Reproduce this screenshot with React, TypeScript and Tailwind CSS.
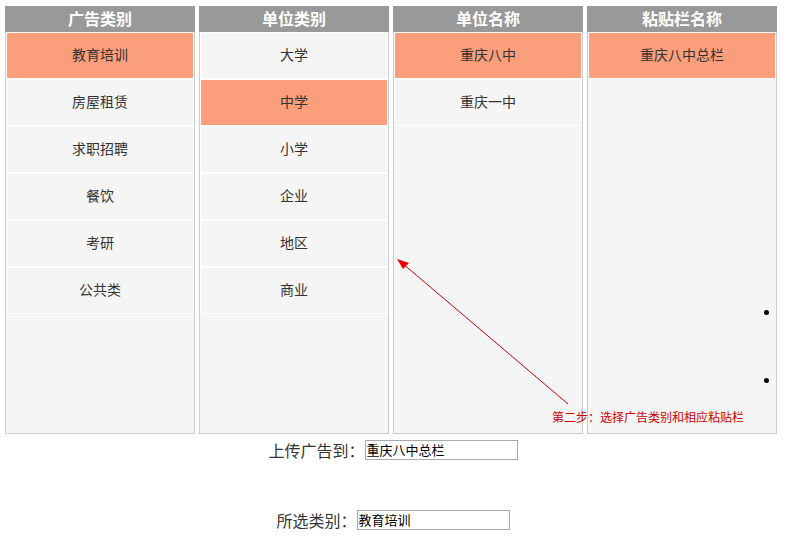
import React from "react";

const cols = [
  { title: "广告类别", items: ["教育培训", "房屋租赁", "求职招聘", "餐饮", "考研", "公共类"], active: 0 },
  { title: "单位类别", items: ["大学", "中学", "小学", "企业", "地区", "商业"], active: 1 },
  { title: "单位名称", items: ["重庆八中", "重庆一中"], active: 0 },
  { title: "粘贴栏名称", items: ["重庆八中总栏"], active: 0 },
];

const font = { fontFamily: '"Microsoft YaHei", "Noto Sans CJK SC", sans-serif' };

export default function App() {
  return (
    <div className="relative w-[789px] h-[540px] bg-white text-[#333]" style={font}>
      <div className="flex gap-[4px] pl-[5px] pt-[6px]">
        {cols.map((c, ci) => (
          <div key={ci} className="w-[190px] flex flex-col">
            <div className="h-[26px] bg-[#999] text-white font-bold text-[16px] leading-[25px] text-center">
              {c.title}
            </div>
            <div className="h-[402px] bg-[#f5f5f5] border border-t-0 border-[#ccc] flex flex-col">
              {c.items.map((it, i) => (
                <div
                  key={i}
                  className={`h-[47px] border border-white flex items-center justify-center text-[14px] pb-[3px] ${
                    i === c.active ? "bg-[#fa9e7b]" : "bg-[#f5f5f5]"
                  }`}
                >
                  {it}
                </div>
              ))}
            </div>
          </div>
        ))}
      </div>

      <div className="flex flex-col items-center mt-[6px]">
        <div className="flex items-center h-[20px] text-[16px] ml-[-3px]">
          <span>上传广告到：</span>
          <div className="w-[153px] h-[20px] border border-[#a9a9a9] text-[13px] leading-[18px] px-[1px] text-black">
            重庆八中总栏
          </div>
        </div>
        <div className="flex items-center h-[20px] text-[16px] mt-[50px] ml-[-3px]">
          <span>所选类别：</span>
          <div className="w-[153px] h-[20px] border border-[#a9a9a9] text-[13px] leading-[18px] px-[1px] text-black">
            教育培训
          </div>
        </div>
      </div>

      <svg className="absolute left-0 top-0 pointer-events-none" width="789" height="540">
        <line x1="568" y1="404" x2="402" y2="263" stroke="#c00" strokeWidth="1" />
        <polygon points="397,259 409,263 403,269" fill="#e00" />
      </svg>

      <div className="absolute left-[552px] top-[409px] text-[12px] leading-[16px] text-[#c00] whitespace-nowrap">
        第二步：选择广告类别和相应粘贴栏
      </div>

      <div className="absolute left-[764px] top-[310px] w-[5px] h-[5px] rounded-full bg-black" />
      <div className="absolute left-[764px] top-[378px] w-[5px] h-[5px] rounded-full bg-black" />
    </div>
  );
}
